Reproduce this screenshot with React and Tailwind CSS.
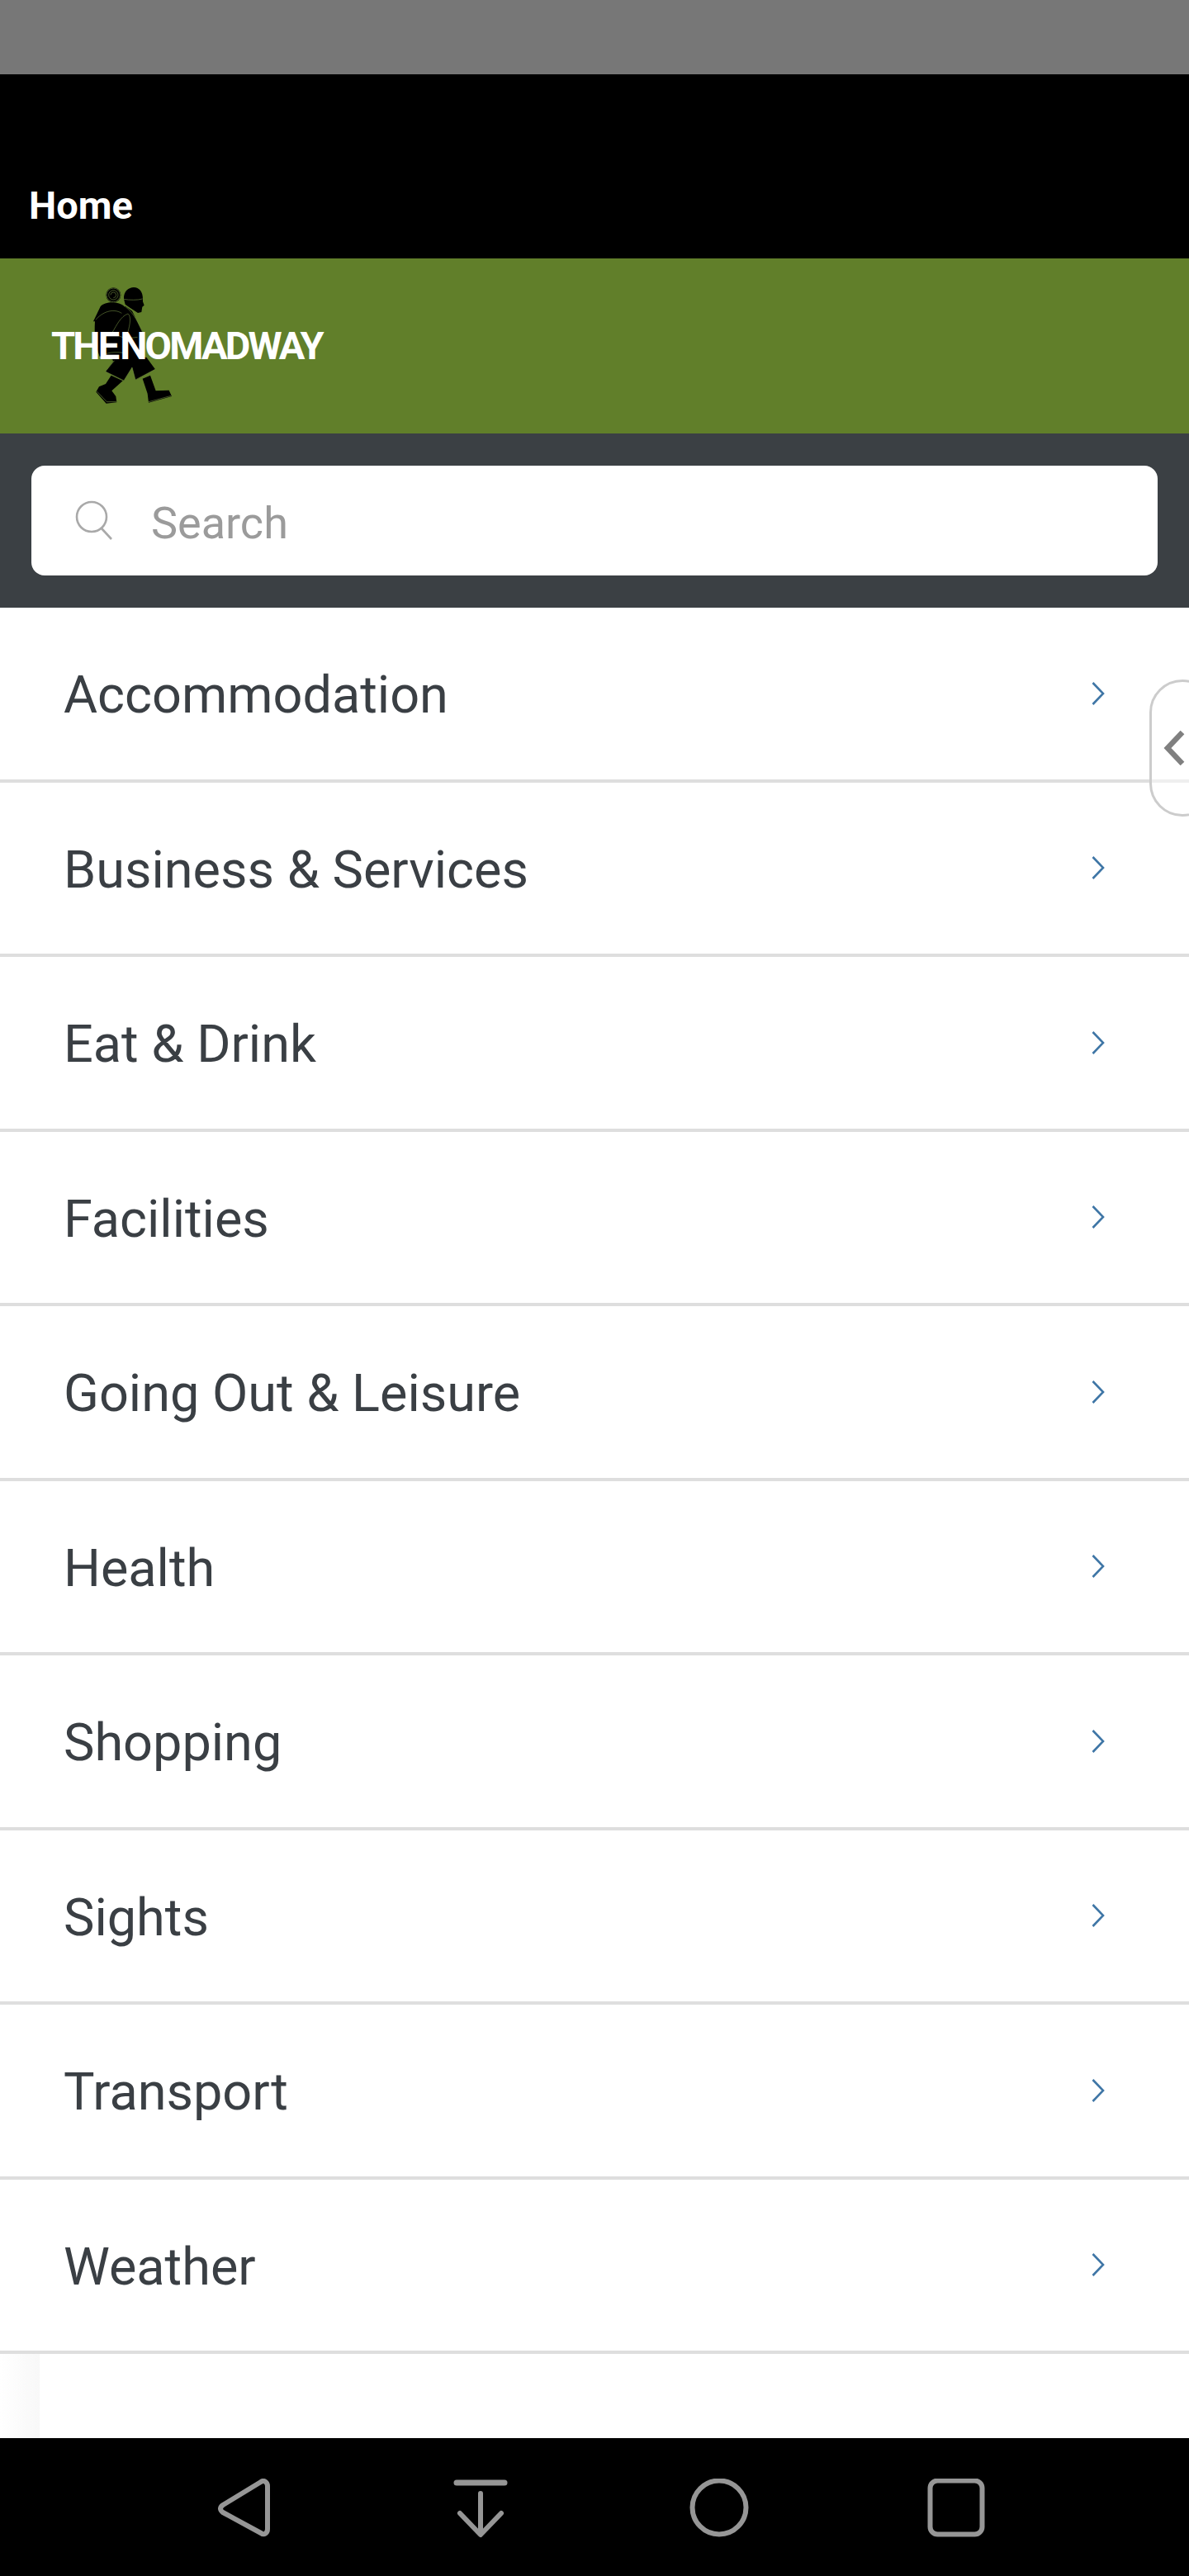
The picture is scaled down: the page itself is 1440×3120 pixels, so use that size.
import React from "react";

const items = ["Accommodation","Business & Services","Eat & Drink","Facilities","Going Out & Leisure","Health","Shopping","Sights","Transport","Weather"];

function Hiker() {
  return (
    <svg viewBox="0 0 370 170" className="absolute left-[40px] top-[17px] w-[370px] h-[170px]">
      <g transform="scale(0.3333)">
        <path fill="#000" d="M330 96 C328 68 348 54 366 54 C386 54 399 70 399 95 L399 106 L404 119 L397 125 L394 144 L381 147 L352 128 L335 116 Z" />
        <circle cx="292" cy="82" r="27" fill="#000" />
        <g fill="none" stroke="#7f9a4a" strokeWidth="1.6">
          <circle cx="292" cy="82" r="25" />
          <circle cx="292" cy="82" r="17" />
          <path d="M282 82 a10 10 0 1 1 10 10" />
        </g>
        <path fill="#000" d="M219 178 L245 124 C262 104 312 104 332 124 L344 150 L300 222 L312 322 L242 305 C226 262 222 222 225 178 Z" />
        <path fill="#000" d="M335 122 L360 140 L398 216 L382 322 L290 322 L282 218 Z" />
        <path fill="#000" d="M296 318 L412 308 L444 352 L372 391 L360 345 L330 394 L263 360 Z" />
        <path fill="#000" d="M284 374 L326 394 L286 430 L301 450 L304 472 L266 476 L229 434 L240 415 L264 405 Z" />
        <path fill="#000" d="M398 386 L426 374 L446 430 L494 428 L504 450 L420 473 L416 440 Z" />
        <g fill="none" stroke="#7f9a4a" strokeWidth="1.6">
          <path d="M330 97 C350 101 380 101 398 96" />
          <path d="M228 172 C250 145 290 128 322 148" />
          <path d="M335 124 C370 150 385 190 398 218" />
          <path d="M288 218 C305 190 318 160 345 150 C358 160 352 190 345 215" />
          <path d="M296 320 L263 360 L330 393 L360 345 L372 390 L444 352" />
          <path d="M232 432 L268 470 L303 470" />
          <path d="M420 470 L502 448" />
          <path d="M240 310 C260 290 300 285 345 295" />
          <path d="M300 222 C320 240 345 240 380 235" />
        </g>
      </g>
    </svg>
  );
}

function Row({ label }) {
  return (
    <div className="h-[211.5px] flex items-center justify-between border-b-4 border-[#dedede] bg-white pl-[77px] pr-[102px]">
      <span className="pt-[4px] text-[63px] leading-none text-[#3a3f44]">{label}</span>
      <svg width="16" height="28" viewBox="0 0 16 28" fill="none" stroke="#3f76a6" strokeWidth="2.6">
        <path d="M1.5 1 L14 14 L1.5 27" />
      </svg>
    </div>
  );
}

export default function App() {
  return (
    <div className="relative w-[1440px] h-[3120px] flex flex-col overflow-hidden bg-white font-['Roboto',sans-serif]">
      <div className="h-[90px] shrink-0 bg-[#777777]" />
      <div className="h-[223px] shrink-0 bg-black flex items-end pl-[35px] pb-[37px]">
        <span className="text-[47px] leading-[54px] font-bold text-white">Home</span>
      </div>
      <div className="relative h-[212px] shrink-0 bg-[#617f2a]">
        <Hiker />
        <span className="absolute left-[62px] top-[79px] text-[47px] leading-[54px] font-bold text-white tracking-[-2.8px] [word-spacing:-6px]">THE NOMADWAY</span>
      </div>
      <div className="h-[211px] shrink-0 bg-[#3b4044] px-[38px] flex items-center">
        <div className="w-full h-[133px] rounded-[16px] bg-white flex items-center pl-[52px]">
          <svg width="50" height="50" viewBox="0 0 50 50" fill="none" stroke="#a9a9a9" strokeWidth="2.6" className="shrink-0">
            <circle cx="21" cy="20" r="18" />
            <path d="M33 34 L45 47" />
          </svg>
          <span className="ml-[43px] pt-[6px] text-[54px] leading-none text-[#9b9b9b]">Search</span>
        </div>
      </div>
      {items.map((l) => <Row key={l} label={l} />)}
      <div className="flex-1 bg-white flex">
        <div className="w-[48px] self-stretch bg-gradient-to-r from-white to-[#f8f8f8]" />
      </div>
      <div className="h-[167px] shrink-0 bg-black flex items-start justify-center pt-[49px]">
        <svg width="1440" height="80" viewBox="0 0 1440 80" fill="none" stroke="#969696" strokeWidth="6" strokeLinecap="round" strokeLinejoin="round">
          <path d="M316 4 C320 1 324 5 324 9 L324 61 C324 66 320 69 316 66 L270 41 C266 38 266 35 270 32 Z" />
          <path d="M553 5 L611 5" strokeWidth="7" />
          <path d="M582 18 L582 66 M557 42 L582 68 L607 42" />
          <circle cx="871" cy="35" r="32.5" />
          <rect x="1126.5" y="2.5" width="63" height="65" rx="9" />
        </svg>
      </div>
      <div className="absolute left-[1392px] top-[823px] w-[80px] h-[166px] rounded-[50px] border-[3px] border-[#cccccc] bg-white/50 flex items-center pl-[14px]">
        <svg width="26" height="42" viewBox="0 0 26 42" fill="none" stroke="#808080" strokeWidth="6.5">
          <path d="M23 2 L5 21 L23 40" />
        </svg>
      </div>
    </div>
  );
}
